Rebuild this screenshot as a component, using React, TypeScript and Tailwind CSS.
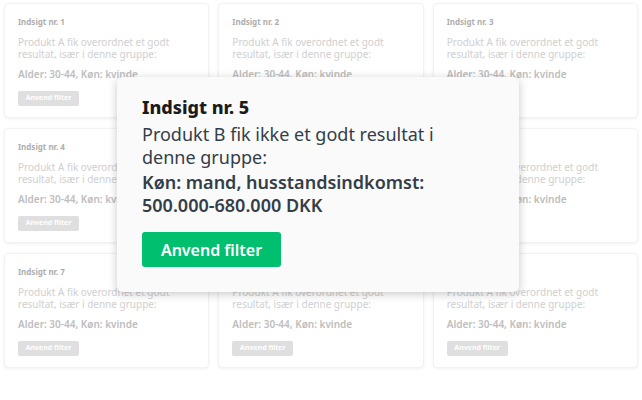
import React from "react";

// Faded background grid of insight cards with one highlighted insight on top.

const FONT = { fontFamily: '"Noto Sans", "Open Sans", Arial, sans-serif' };

const CARDS = [1, 2, 3, 4, 5, 6, 7, 8, 9];

function InsightCard({ n }: { n: number }) {
  return (
    <div className="h-[115px] rounded-[4px] border border-[#f1f1f1] bg-white px-[13px] pt-[12px] shadow-[0_1px_3px_rgba(0,0,0,0.06)]">
      <p className="text-[8px] font-bold leading-[12px] text-[#a6a6a6]">Indsigt nr. {n}</p>
      <p className="mt-[8px] text-[10px] leading-[12px] text-[#cbcbcb]">
        Produkt A fik overordnet et godt resultat, især i denne gruppe:
      </p>
      <p className="mt-[8px] text-[10px] font-semibold leading-[12px] text-[#b7b7b7]">
        Alder: 30-44, Køn: kvinde
      </p>
      <button className="mt-[11px] flex h-[15px] w-[61px] items-center justify-center rounded-[2px] bg-[#dcdcdc] text-[7px] font-bold text-white">
        Anvend filter
      </button>
    </div>
  );
}

export default function App() {
  return (
    <div className="relative h-[400px] w-[642px] overflow-hidden bg-white" style={FONT}>
      <div className="grid grid-cols-3 gap-x-[9px] gap-y-[10px] px-[4px] pt-[3px] opacity-90">
        {CARDS.map((n) => (
          <InsightCard key={n} n={n} />
        ))}
      </div>

      {/* Highlighted insight */}
      <div className="absolute left-[117px] top-[77px] w-[402px] rounded-[6px] bg-[#fafafa] px-[25px] pb-[25px] pt-[19px] shadow-[0_2px_10px_rgba(0,0,0,0.22)]">
        <h2 className="text-[18px] font-extrabold leading-[23px] text-[#1b1b1b]">Indsigt nr. 5</h2>
        <div className="w-[320px]">
          <p className="mt-[4px] text-[18px] leading-[23px] text-[#333e48]">
            Produkt B fik ikke et godt resultat i denne gruppe:
          </p>
          <p className="mt-[2px] text-[18px] font-semibold leading-[23px] text-[#333e48]">
            Køn: mand, husstandsindkomst: 500.000-680.000 DKK
          </p>
        </div>
        <button className="mt-[15px] flex h-[35px] w-[139px] items-center justify-center rounded-[3px] bg-[#00bf6f] text-[16px] font-semibold text-white">
          Anvend filter
        </button>
      </div>
    </div>
  );
}
